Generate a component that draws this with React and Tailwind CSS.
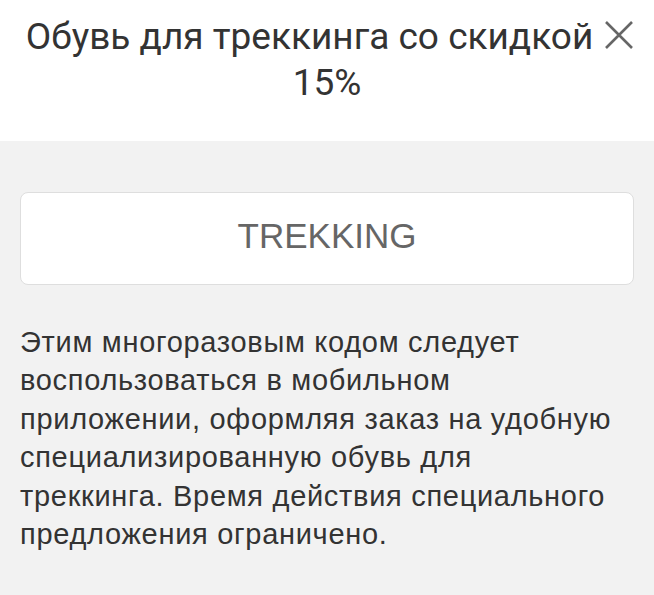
import React from 'react';

const CloseIcon = () => (
    <svg width="28" height="28" viewBox="0 0 28 28" fill="none" stroke="#666666" strokeWidth="2.6" strokeLinecap="butt">
        <path d="M1 1 L27 27 M27 1 L1 27" />
    </svg>
);

export default function App() {
    return (
        <div className="w-[654px] h-[595px] bg-[#f2f2f2] overflow-hidden">
            <div className="relative bg-white h-[141px] pt-[14px] pl-[20px] pr-[55px]">
                <h1 className="text-center text-[37px] leading-[46px] text-[#333333] font-['Roboto',sans-serif] font-normal">
                    Обувь для треккинга со скидкой
                    <span className="block pl-[35px]">15%</span>
                </h1>
                <button className="absolute right-[21px] top-[21px]">
                    <CloseIcon />
                </button>
            </div>

            <div className="px-[20px] pt-[51px]">
                <div className="h-[93px] pb-[4px] bg-white rounded-[8px] border border-[#dedede] flex items-center justify-center">
                    <span className="text-[35px] text-[#666666] font-['Liberation_Sans',Arial,sans-serif]">TREKKING</span>
                </div>
                <p className="mt-[38px] pr-[20px] text-[29px] tracking-[0.7px] leading-[38.4px] text-[#333333] font-['Liberation_Sans',Arial,sans-serif]">
                    Этим многоразовым кодом следует воспользоваться в мобильном приложении, оформляя заказ на удобную специализированную обувь для треккинга. Время действия специального предложения ограничено.
                </p>
            </div>
        </div>
    );
}
